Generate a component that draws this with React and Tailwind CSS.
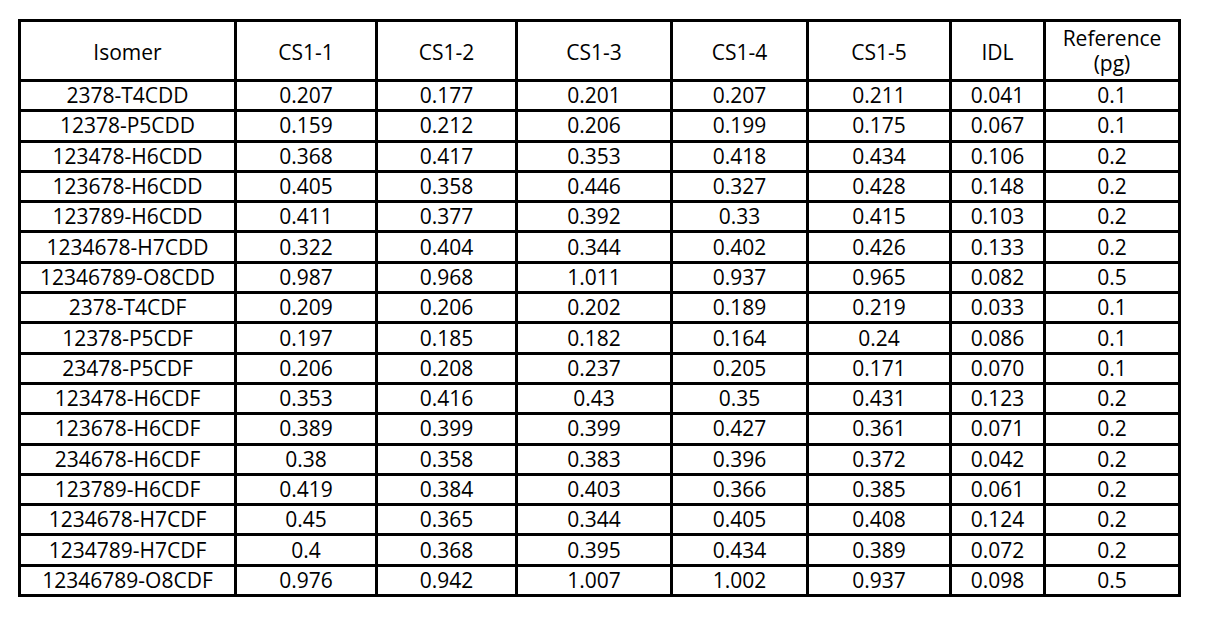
import React from "react";

const rows = [
  ["2378-T4CDD", "0.207", "0.177", "0.201", "0.207", "0.211", "0.041", "0.1"],
  ["12378-P5CDD", "0.159", "0.212", "0.206", "0.199", "0.175", "0.067", "0.1"],
  ["123478-H6CDD", "0.368", "0.417", "0.353", "0.418", "0.434", "0.106", "0.2"],
  ["123678-H6CDD", "0.405", "0.358", "0.446", "0.327", "0.428", "0.148", "0.2"],
  ["123789-H6CDD", "0.411", "0.377", "0.392", "0.33", "0.415", "0.103", "0.2"],
  ["1234678-H7CDD", "0.322", "0.404", "0.344", "0.402", "0.426", "0.133", "0.2"],
  ["12346789-O8CDD", "0.987", "0.968", "1.011", "0.937", "0.965", "0.082", "0.5"],
  ["2378-T4CDF", "0.209", "0.206", "0.202", "0.189", "0.219", "0.033", "0.1"],
  ["12378-P5CDF", "0.197", "0.185", "0.182", "0.164", "0.24", "0.086", "0.1"],
  ["23478-P5CDF", "0.206", "0.208", "0.237", "0.205", "0.171", "0.070", "0.1"],
  ["123478-H6CDF", "0.353", "0.416", "0.43", "0.35", "0.431", "0.123", "0.2"],
  ["123678-H6CDF", "0.389", "0.399", "0.399", "0.427", "0.361", "0.071", "0.2"],
  ["234678-H6CDF", "0.38", "0.358", "0.383", "0.396", "0.372", "0.042", "0.2"],
  ["123789-H6CDF", "0.419", "0.384", "0.403", "0.366", "0.385", "0.061", "0.2"],
  ["1234678-H7CDF", "0.45", "0.365", "0.344", "0.405", "0.408", "0.124", "0.2"],
  ["1234789-H7CDF", "0.4", "0.368", "0.395", "0.434", "0.389", "0.072", "0.2"],
  ["12346789-O8CDF", "0.976", "0.942", "1.007", "1.002", "0.937", "0.098", "0.5"],
];

const headers = ["Isomer", "CS1-1", "CS1-2", "CS1-3", "CS1-4", "CS1-5", "IDL"];

export default function App() {
  return (
    <div
      className="w-[1206px] h-[622px] bg-white pl-[18px] pt-[19px]"
      style={{ fontFamily: "'Open Sans', Lato, sans-serif" }}
    >
      <div className="grid w-[1163px] bg-black p-[3px] gap-[3px] grid-cols-[213px_138px_137px_152px_133px_140px_91px_132px] grid-rows-[57px_repeat(17,27.3px)] text-[21px] text-black leading-none">
        {headers.map((h) => (
          <div key={h} className="bg-white flex items-center justify-center pt-[4px]">
            {h}
          </div>
        ))}
        <div className="bg-white flex flex-col items-center justify-center leading-[25px]">
          <span>Reference</span>
          <span>(pg)</span>
        </div>
        {rows.map((r, i) =>
          r.map((c, j) => (
            <div key={i + "-" + j} className="bg-white flex items-center justify-center">
              {c}
            </div>
          ))
        )}
      </div>
    </div>
  );
}
